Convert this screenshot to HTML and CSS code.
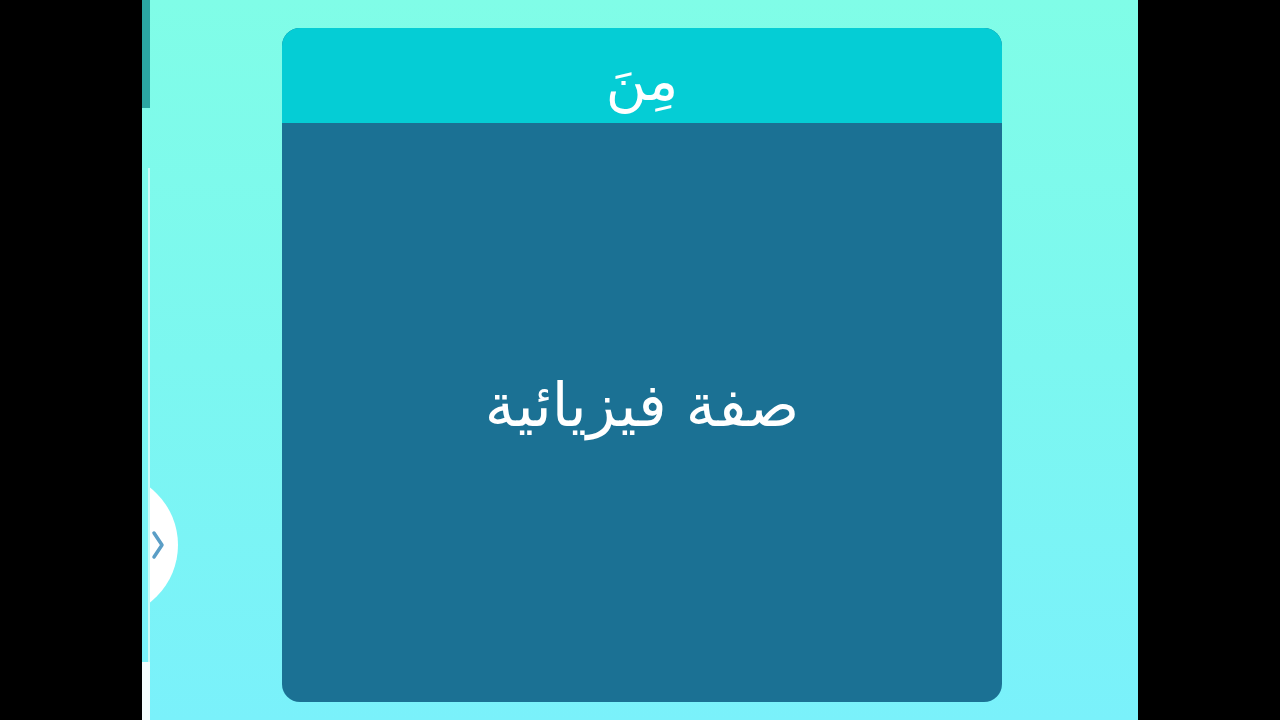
FILE: index.html
```html
<!DOCTYPE html>
<html lang="ar">
<head>
<meta charset="utf-8">
<link rel="stylesheet" href="styles.css">
<title>من</title>
</head>
<body>
<div class="frame">
  <div class="side"></div>
  <main class="stage">
    <div class="edge">
      <div class="edge-top"></div>
      <div class="edge-line"></div>
      <div class="edge-bottom"></div>
    </div>
    <div class="next">
      <svg width="14" height="32" viewBox="0 0 14 32"><path d="M3 4 L11 16 L3 28" fill="none" stroke="#5b9ec6" stroke-width="3.5" stroke-linecap="round" stroke-linejoin="round"/></svg>
    </div>
    <section class="card">
      <header class="card-head" dir="rtl">مِنَ</header>
      <div class="card-body" dir="rtl">صفة فيزيائية</div>
    </section>
  </main>
  <div class="side"></div>
</div>
</body>
</html>
```
FILE: styles.css
```css
html, body {
  margin: 0;
  padding: 0;
  background: #000;
}
.frame {
  display: flex;
  width: 1280px;
  height: 720px;
  overflow: hidden;
}
.side {
  width: 142px;
  flex: none;
  background: #000;
}
.stage {
  position: relative;
  width: 996px;
  flex: none;
  display: flex;
  background: linear-gradient(180deg, #80fde7 0%, #7cf7f0 50%, #7af1fb 100%);
}
.edge {
  width: 8px;
  flex: none;
  display: flex;
  flex-direction: column;
}
.edge-top {
  height: 108px;
  background: #2ba6a2;
}
.edge-line {
  flex: 1;
  margin-top: 60px;
  border-right: 2px solid #c9fbf7;
}
.edge-bottom {
  height: 58px;
  background: #f4fdfd;
}
.next {
  position: absolute;
  left: -110px;
  top: 472px;
  width: 146px;
  height: 146px;
  border-radius: 50%;
  background: #fff;
  clip-path: inset(0 0 0 118px);
  display: flex;
  align-items: center;
  justify-content: flex-end;
  padding-right: 13px;
  box-sizing: border-box;
}
.card {
  margin: 28px 0 18px 132px;
  width: 720px;
  height: 674px;
  border-radius: 18px;
  overflow: hidden;
  display: flex;
  flex-direction: column;
  background: #1b7194;
}
.card-head {
  height: 95px;
  flex: none;
  background: #05cdd5;
  color: #fff;
  font-family: "DejaVu Sans", sans-serif;
  font-size: 56px;
  display: flex;
  align-items: center;
  justify-content: center;
  padding-top: 10px;
  box-sizing: border-box;
}
.card-body {
  flex: 1;
  display: flex;
  align-items: center;
  justify-content: center;
  color: #fff;
  font-family: "DejaVu Sans", sans-serif;
  font-size: 60px;
  padding-bottom: 16px;
}
```
